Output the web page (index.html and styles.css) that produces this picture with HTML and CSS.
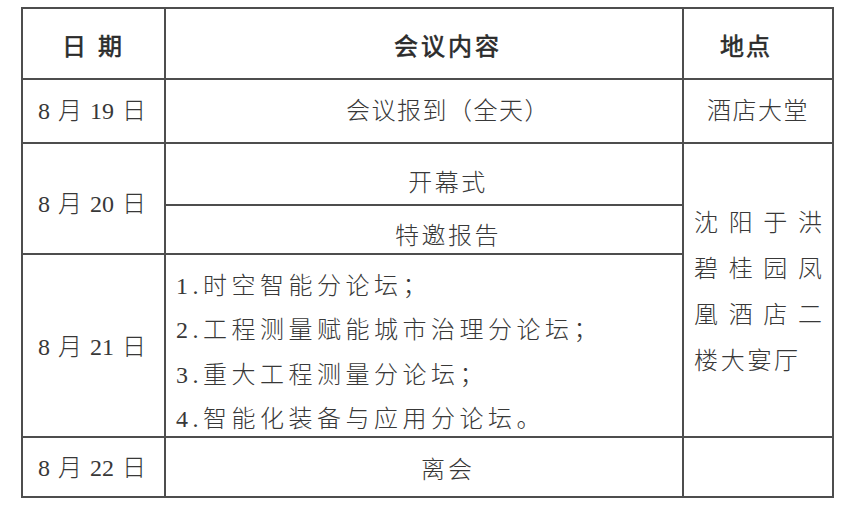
FILE: index.html
```html
<!DOCTYPE html>
<html lang="zh-CN">
<head>
<meta charset="utf-8">
<title>会议日程</title>
<link rel="stylesheet" href="styles.css">
</head>
<body>
<table class="sched">
  <colgroup>
    <col class="c-date">
    <col class="c-content">
    <col class="c-place">
  </colgroup>
  <tr class="r-head">
    <th class="date-h">日&nbsp;期</th>
    <th class="content-h">会议内容</th>
    <th class="place-h">地点</th>
  </tr>
  <tr class="r-19">
    <td class="date">8 月 19 日</td>
    <td class="center">会议报到（全天）</td>
    <td class="place-s">酒店大堂</td>
  </tr>
  <tr class="r-20a">
    <td class="date d20" rowspan="2">8 月 20 日</td>
    <td class="center c20a">开幕式</td>
    <td class="place" rowspan="3">
      <div class="loc">
        <div class="ln">沈阳于洪</div>
        <div class="ln">碧桂园凤</div>
        <div class="ln">凰酒店二</div>
        <div class="ln last">楼大宴厅</div>
      </div>
    </td>
  </tr>
  <tr class="r-20b">
    <td class="center c20b">特邀报告</td>
  </tr>
  <tr class="r-21">
    <td class="date d21">8 月 21 日</td>
    <td class="list">
      <div class="items">
        <div>1.时空智能分论坛；</div>
        <div>2.工程测量赋能城市治理分论坛；</div>
        <div>3.重大工程测量分论坛；</div>
        <div>4.智能化装备与应用分论坛。</div>
      </div>
    </td>
  </tr>
  <tr class="r-22">
    <td class="date d22">8 月 22 日</td>
    <td class="center c22">离会</td>
    <td></td>
  </tr>
</table>
</body>
</html>
```
FILE: styles.css
```css
html, body {
  margin: 0;
  background: #ffffff;
}
body {
  padding: 7px 0 0 21px;
  font-family: "Liberation Serif", "Noto Sans CJK SC", serif;
  color: #383838;
  font-size: 24px;
}
.sched {
  border-collapse: collapse;
  table-layout: fixed;
  width: 811px;
}
.c-date { width: 143px; }
.c-content { width: 518px; }
.c-place { width: 150px; }

.sched th,
.sched td {
  border: 2px solid #4e4e4e;
  padding: 0;
  text-align: center;
  vertical-align: middle;
  font-weight: 300;
  line-height: 1.2;
}
.sched th {
  font-weight: 400;
  color: #2b2b2b;
  -webkit-text-stroke: 0.6px #2b2b2b;
}
.r-head { height: 71px; }
.r-19 { height: 64px; }
.r-20a { height: 62px; }
.r-20b { height: 49px; }
.r-21 { height: 183px; }
.r-22 { height: 60px; }

.sched .date-h { letter-spacing: 3px; padding-top: 8px; }
.sched .content-h { letter-spacing: 3px; padding: 8px 0 0 48px; }
.sched .place-h { letter-spacing: 2px; padding: 8px 24px 0 0; }

.sched .date { word-spacing: 2px; padding-right: 3px; }
.sched .d20 { padding-top: 12px; }
.sched .d21 { padding-top: 4px; }
.sched .d22 { padding-top: 2px; }

.sched .center { padding-left: 48px; letter-spacing: 1.5px; }
.sched .c20a { letter-spacing: 2.5px; padding-top: 18px; }
.sched .c20b { letter-spacing: 2.5px; padding-top: 14px; }
.sched .c22 { letter-spacing: 3px; padding-top: 6px; }

.sched .place-s { letter-spacing: 1.5px; padding-left: 0; }

.sched .place { padding-top: 4px; }
.loc {
  width: 128px;
  margin: 0 auto;
  text-align: left;
}
.ln {
  line-height: 46px;
  text-align: justify;
  text-align-last: justify;
  letter-spacing: 0;
}
.ln.last {
  text-align-last: left;
  letter-spacing: 2.7px;
}

.sched .list {
  text-align: left;
  padding: 9px 0 0 10px;
  letter-spacing: 4.5px;
  vertical-align: top;
}
.items {
  height: 170px;
}
.items div {
  line-height: 44.3px;
  white-space: nowrap;
}
```
